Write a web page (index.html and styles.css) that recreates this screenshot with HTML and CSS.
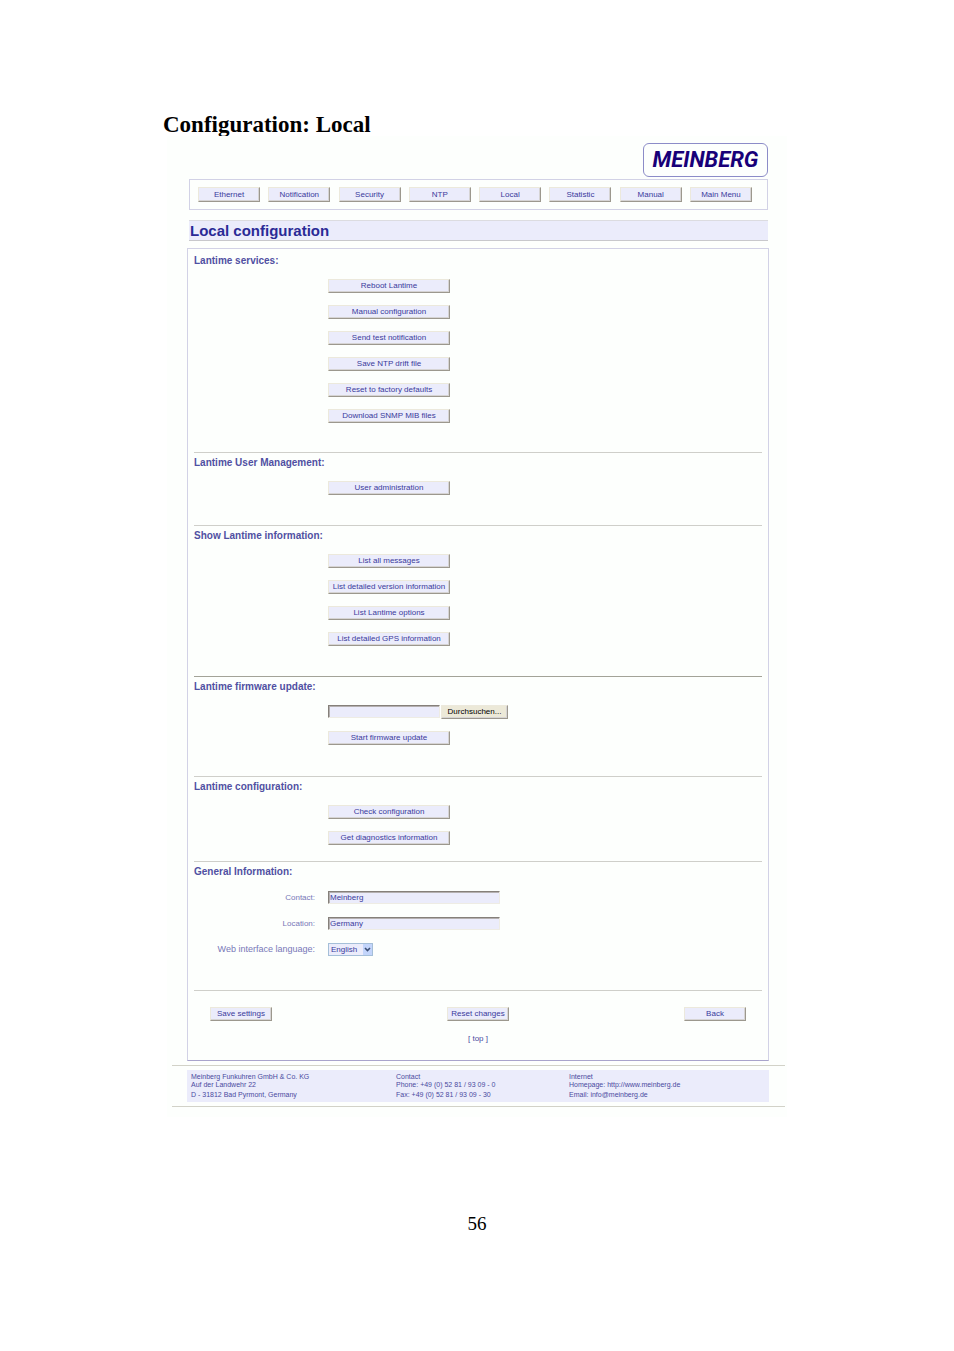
FILE: index.html
```html
<!DOCTYPE html>
<html lang="en">
<head>
  <meta charset="UTF-8" />
  <meta name="viewport" content="width=device-width, initial-scale=1" />
  <title>Configuration: Local</title>
  <link rel="stylesheet" href="styles.css">
</head>
<body>

<div class="page">
  <h1>Configuration: Local</h1>

  <div class="screen" id="top">
    <header>
      <div class="logo">MEINBERG</div>
    </header>

    <nav>
      <button type="button">Ethernet</button>
      <button type="button">Notification</button>
      <button type="button">Security</button>
      <button type="button">NTP</button>
      <button type="button">Local</button>
      <button type="button">Statistic</button>
      <button type="button">Manual</button>
      <button type="button">Main Menu</button>
    </nav>

    <h2>Local configuration</h2>

    <form class="panel">
      <section class="services">
        <h3>Lantime services:</h3>
        <div class="stack">
          <button type="button">Reboot Lantime</button>
          <button type="button">Manual configuration</button>
          <button type="button">Send test notification</button>
          <button type="button">Save NTP drift file</button>
          <button type="button">Reset to factory defaults</button>
          <button type="button">Download SNMP MIB files</button>
        </div>
      </section>

      <section>
        <h3>Lantime User Management:</h3>
        <div class="stack">
          <button type="button">User administration</button>
        </div>
      </section>

      <section>
        <h3>Show Lantime information:</h3>
        <div class="stack">
          <button type="button">List all messages</button>
          <button type="button">List detailed version information</button>
          <button type="button">List Lantime options</button>
          <button type="button">List detailed GPS information</button>
        </div>
      </section>

      <section class="firmware">
        <h3>Lantime firmware update:</h3>
        <div class="stack">
          <div class="upload">
            <input type="text" aria-label="Firmware file">
            <button type="button" class="browse">Durchsuchen...</button>
          </div>
          <button type="button">Start firmware update</button>
        </div>
      </section>

      <section class="config">
        <h3>Lantime configuration:</h3>
        <div class="stack">
          <button type="button">Check configuration</button>
          <button type="button">Get diagnostics information</button>
        </div>
      </section>

      <section class="general">
        <h3>General Information:</h3>
        <div class="fields">
          <label for="contact">Contact:</label>
          <input type="text" id="contact" value="Meinberg">
          <label for="location">Location:</label>
          <input type="text" id="location" value="Germany">
          <label for="language" class="big">Web interface language:</label>
          <div class="select">
            <select id="language">
              <option>English</option>
              <option>German</option>
            </select>
            <svg viewBox="0 0 9 11"><rect width="9" height="11" fill="#c3d5fb"/><path d="M2 4l2.5 2.5L7 4" fill="none" stroke="#3c4f75" stroke-width="1.6"/></svg>
          </div>
        </div>
      </section>

      <section class="actions">
        <div class="buttons">
          <button type="submit">Save settings</button>
          <button type="reset">Reset changes</button>
          <button type="button">Back</button>
        </div>
        <a href="#top">[ top ]</a>
      </section>
    </form>

    <footer>
      <div class="address">
        <div>
          <p>Meinberg Funkuhren GmbH &amp; Co. KG</p>
          <p>Auf der Landwehr 22</p>
          <p>D - 31812 Bad Pyrmont, Germany</p>
        </div>
        <div>
          <p>Contact</p>
          <p>Phone: +49 (0) 52 81 / 93 09 - 0</p>
          <p>Fax: +49 (0) 52 81 / 93 09 - 30</p>
        </div>
        <div>
          <p>Internet</p>
          <p>Homepage: <a href="http://www.meinberg.de">http://www.meinberg.de</a></p>
          <p>Email: <a href="mailto:info@meinberg.de">info@meinberg.de</a></p>
        </div>
      </div>
    </footer>
  </div>

  <p class="page-number">56</p>
</div>

</body>
</html>
```
FILE: styles.css
```css
* {
  box-sizing: border-box;
}

body {
  margin: 0;
  background: #fff;
  color: #000;
  font-family: "Liberation Serif", "Times New Roman", serif;
}

h1, h2, h3, p {
  margin: 0;
}

.page {
  max-width: 620px;
  margin: 0 auto;
  padding: 112px 0 100px;
}

h1 {
  height: 24px;
  margin-left: -4px;
  font-size: 23px;
  line-height: 26px;
  overflow: hidden;
}

.screen {
  padding: 7px 18px 10px 20px;
  background: #fdfffd;
  color: #4a4aa0;
  font-family: "Liberation Sans", Arial, sans-serif;
  font-size: 8px;
}

header {
  display: flex;
  justify-content: flex-end;
  margin-right: 1px;
}

.logo {
  width: 125px;
  height: 34px;
  border: 1px solid #8c8cc8;
  border-radius: 6px;
  color: #180078;
  font-family: Roboto, "Liberation Sans", Arial, sans-serif;
  font-size: 22px;
  font-style: italic;
  font-weight: bold;
  line-height: 32px;
  text-align: center;
}

nav {
  display: flex;
  justify-content: space-between;
  margin: 2px 1px 0 2px;
  padding: 7px 15px 7px 8px;
  border: 1px solid #d2d2e6;
}

button {
  width: 122px;
  height: 14px;
  padding: 0;
  border: 1px solid;
  border-color: #ece9dc #9c988e #9c988e #ece9dc;
  background: #ebecfb;
  box-shadow: inset -1px -1px #d6d4d4;
  color: #3a3a9c;
  font-family: inherit;
  font-size: 8px;
  line-height: 12px;
  white-space: nowrap;
}

nav button,
.buttons button {
  width: 62px;
}

nav button {
  height: 15px;
}

h2 {
  margin: 10px 1px 7px 2px;
  padding-left: 1px;
  border-top: 1px solid #dcdce0;
  border-bottom: 1px solid #c8c8cc;
  background: #ebecfb;
  color: #2a2a96;
  font-size: 15px;
  line-height: 19px;
}

.panel {
  padding: 2px 6px 15px;
  border: 1px solid #d2d2e6;
  border-bottom-color: #a9a4cc;
}

section {
  padding: 4px 0 30px;
  border-top: 1px solid #cfcfca;
}

section:first-child {
  border-top: none;
}

.services {
  padding-bottom: 29px;
}

.firmware {
  padding-bottom: 31px;
  border-top-color: #a3a398;
}

h3 {
  margin-bottom: 12px;
  color: #5050a2;
  font-size: 10px;
  line-height: 12px;
}

.stack {
  display: flex;
  flex-direction: column;
  align-items: flex-start;
  gap: 12px;
  margin-left: 134px;
}

input,
select {
  height: 13px;
  padding: 0 1px;
  border: 1px solid;
  border-color: #85807a #eeece4 #eeece4 #85807a;
  border-radius: 0;
  background: #ebecfb;
  box-shadow: inset 1px 1px #b4b0b0;
  color: #3a3a9c;
  font-family: inherit;
  font-size: 8px;
}

.upload {
  display: flex;
  gap: 1px;
}

.upload input {
  width: 112px;
}

.browse {
  width: 67px;
  background: #ece9d8;
  color: #000;
}

.config {
  padding-bottom: 16px;
}

.general {
  padding-bottom: 34px;
}

.fields {
  display: grid;
  grid-template-columns: 121px 172px;
  gap: 12px 13px;
  grid-auto-rows: 14px;
  align-items: center;
}

label {
  color: #7878b8;
  text-align: right;
}

label.big {
  font-size: 9px;
}

.select {
  position: relative;
  display: flex;
  width: 45px;
}

select {
  width: 100%;
  padding: 0 2px;
  border-color: #a5bfd8;
  box-shadow: none;
  appearance: none;
}

.select svg {
  position: absolute;
  top: 1px;
  right: 1px;
  width: 9px;
  height: 11px;
  pointer-events: none;
}

.actions {
  padding: 16px 0 0;
  text-align: center;
}

.buttons {
  display: flex;
  justify-content: space-between;
  margin-bottom: 12px;
  padding: 0 16px;
}

a {
  color: inherit;
  text-decoration: none;
}

.actions a {
  display: block;
  line-height: 12px;
}

footer {
  margin: 4px -16px 0 -15px;
  padding: 4px 16px 4px 15px;
  border-top: 1px solid #d2d2c8;
  border-bottom: 1px solid #d2d2c8;
}

.address {
  display: grid;
  grid-template-columns: 205fr 173fr 200fr;
  padding: 3px 0 3px 4px;
  background: #ebecfb;
  font-size: 7px;
  line-height: 8px;
}

.address p:last-child {
  margin-top: 2px;
}

.page-number {
  margin-top: 96px;
  font-size: 19px;
  line-height: 22px;
  text-align: center;
}
```
